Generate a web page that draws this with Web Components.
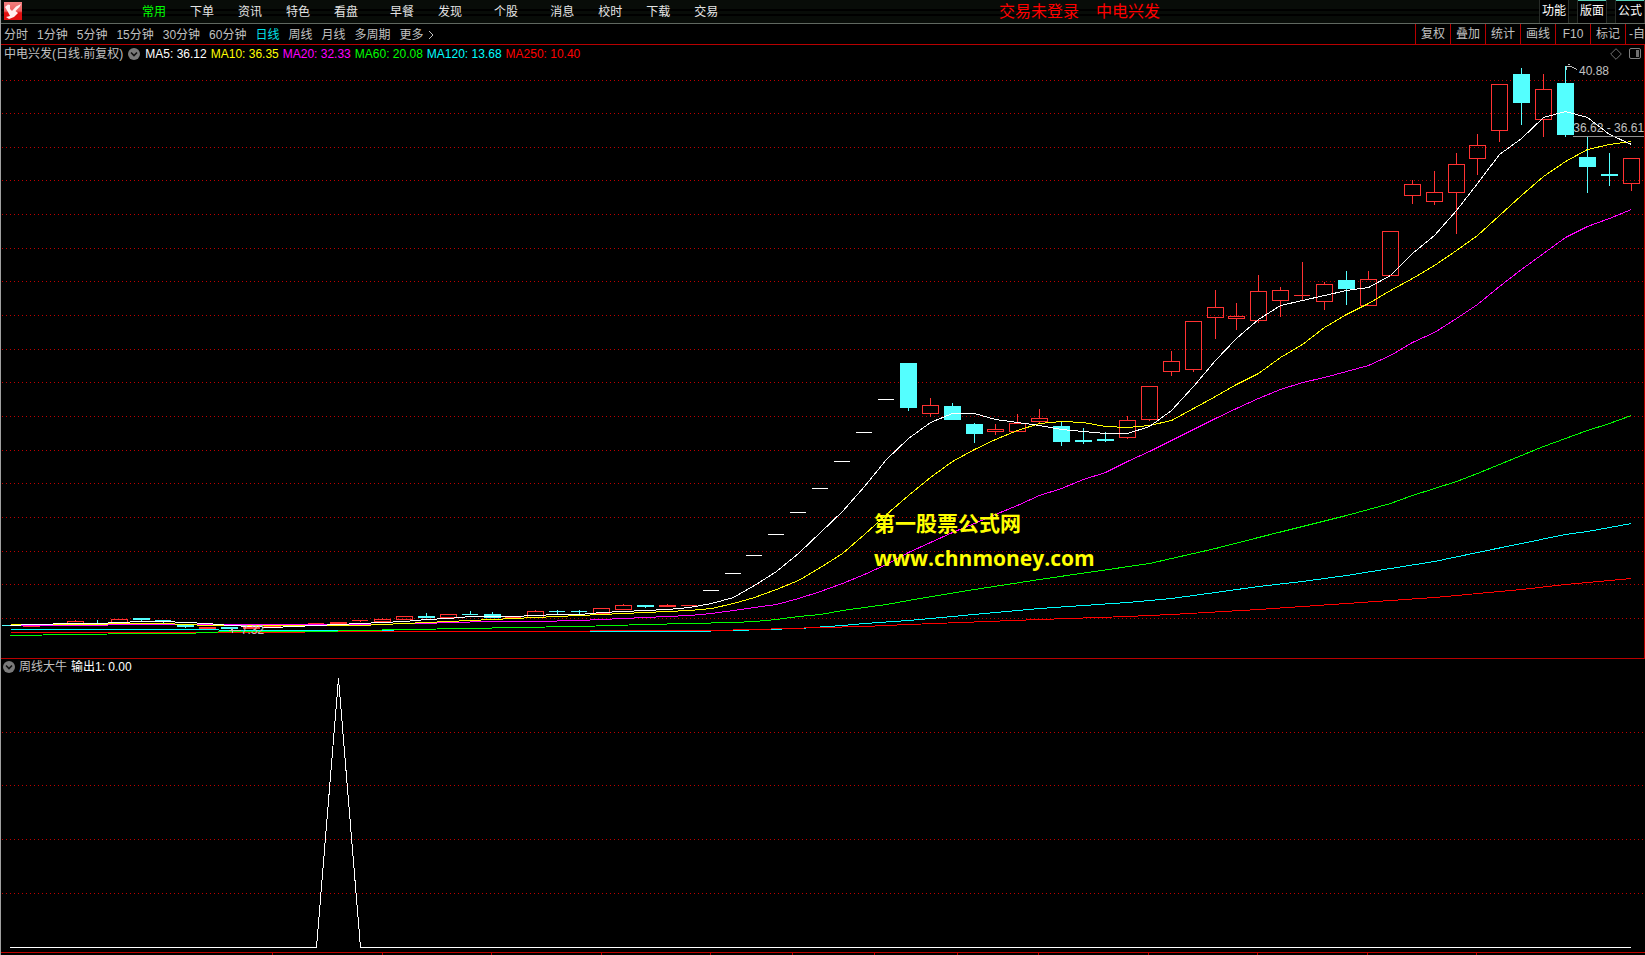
<!DOCTYPE html>
<html lang="zh-CN">
<head>
<meta charset="utf-8">
<title>中电兴发 - 日线</title>
<style>
html, body { margin: 0; height: 100%; background: #000; }
body { font: 12px/16px "Liberation Sans", "Noto Sans CJK SC", sans-serif; color: #c0c0c0; overflow: hidden; }
</style>
</head>
<body>
<stock-terminal></stock-terminal>
<script>
const SVG_BASE = `svg.plot{position:absolute;inset:0;width:100%;height:100%;display:block;shape-rendering:crispEdges}
  svg.plot polyline{fill:none;stroke-width:1}`;

class BaseElement extends HTMLElement {
  constructor() { super(); this.attachShadow({ mode: "open" }); }
  connectedCallback() { this.shadowRoot.innerHTML = this.render(); }
}

/* Round collapse button that sits beside an indicator title */
customElements.define("collapse-button", class extends BaseElement {
  render() {
    return `<style>
      :host{display:inline-flex}
      button{all:unset;display:flex;width:12px;height:12px;cursor:pointer}
    </style>
    <button type="button" aria-label="展开"><svg width="12" height="12" viewBox="0 0 12 12">
      <circle cx="6" cy="6" r="6" fill="#7a7a7a"/><path d="M3 4.5 6 7.5 9 4.5" fill="none" stroke="#111" stroke-width="1.6"/></svg></button>`;
  }
});

customElements.define("menu-group", class extends BaseElement {
  render() {
    return `<style>
      :host{display:flex;gap:24px}
      ::slotted(button){all:unset;cursor:pointer;white-space:nowrap}
      ::slotted(button[aria-current]){color:#00ff00}
    </style><slot></slot>`;
  }
});

customElements.define("menu-bar", class extends BaseElement {
  render() {
    return `<style>
      :host{display:block}
      header{display:grid;grid-template-columns:minmax(0,998fr) minmax(0,646fr);height:23px;box-sizing:content-box;
        border-bottom:1px solid #606860;background:linear-gradient(#080c08 0 9px,#000 9px 11px,#080c08 11px 14px,#000 14px 16px,#080c08 16px);color:#e4e4e4;overflow:hidden}
      .left,.right{display:flex;align-items:center;height:23px}
      .logo{margin:0 120px 2px 3px;flex:none}
      nav{display:flex;gap:32px}
      .status{font-size:16px;line-height:22px;color:#f00;display:flex;gap:17px;white-space:nowrap}
      .tools{margin-left:auto;display:flex;gap:8px;align-self:stretch}
      .tools button{all:unset;box-sizing:border-box;width:30px;background:#000;border:1px solid #282c28;border-width:0 1px;
        color:#fff;text-align:center;line-height:23px;white-space:nowrap;cursor:pointer}
      .tools button.on{box-shadow:inset 0 1px #58d0b8}
    </style>
    <header>
      <div class="left">
        <svg class="logo" width="18" height="18" viewBox="0 0 18 18" role="img" aria-label="通达信">
          <defs><linearGradient id="g" x1="0" y1="0" x2="0" y2="1"><stop offset="0" stop-color="#f08080"/><stop offset=".5" stop-color="#f06060"/><stop offset=".6" stop-color="#e01010"/></linearGradient></defs>
          <rect width="18" height="18" fill="url(#g)"/>
          <path d="M1 5 4 2.500 6 3 6 7 8 9 12 4.500 17 2 15.500 5 11.500 9 14 11 10 15 5 17 2 15 6 14 4 10Z" fill="#fff0f0"/>
        </svg>
        <nav>
          <menu-group><button aria-current="page">常用</button><button>下单</button><button>资讯</button><button>特色</button><button>看盘</button></menu-group>
          <menu-group><button>早餐</button><button>发现</button></menu-group>
          <menu-group><button>个股</button></menu-group>
          <menu-group><button>消息</button><button>校时</button><button>下载</button><button>交易</button></menu-group>
        </nav>
      </div>
      <div class="right">
        <div class="status"><span>交易未登录</span><span>中电兴发</span></div>
        <div class="tools"><button>功能</button><button class="on">版面</button><button class="on">公式</button></div>
      </div>
    </header>`;
  }
});

customElements.define("period-bar", class extends BaseElement {
  render() {
    const periods = ["分时", "1分钟", "5分钟", "15分钟", "30分钟", "60分钟", "日线", "周线", "月线", "多周期"];
    const tools = ["复权", "叠加", "统计", "画线", "F10", "标记"];
    return `<style>
      :host{display:block}
      .bar{display:flex;justify-content:space-between;height:20px;border-bottom:1px solid #b80000;overflow:hidden}
      button{all:unset;cursor:pointer;white-space:nowrap}
      nav{display:flex;align-items:center;gap:9px;padding:1px 0 0 3px}
      nav button[aria-current]{color:#00e0e8}
      .more{display:flex;align-items:center;gap:4px}
      .tools{display:flex}
      .tools button{box-sizing:border-box;width:35px;border-left:1px solid #b80000;text-align:center;line-height:21px}
      .tools button:last-child{width:20px;padding-left:3px;text-align:left;overflow:hidden}
    </style>
    <div class="bar">
      <nav>${periods.map(p => `<button${p === "日线" ? ' aria-current="page"' : ""}>${p}</button>`).join("")}
        <button class="more">更多<svg width="6" height="10" viewBox="0 0 6 10"><path d="M1 1 5 5 1 9" fill="none" stroke="#c0c0c0"/></svg></button></nav>
      <div class="tools">${tools.map(t => `<button>${t}</button>`).join("")}<button>-自选</button></div>
    </div>`;
  }
});

/* Geometry of the daily series: bar k has its centre at 10 + 21.91k */
const barX = k => Math.floor(10 + 21.91 * k);

/* [bar, kind, body top, body bottom, high, low]; r = rising, f = falling, w = limit board */
const CANDLES = [
  [0,"f",625,625,625,625],[1,"r",625,626,625,626],[3,"r",621,623,620,623],[4,"f",623,623,620,623],[5,"r",619,622,619,622],
  [6,"f",618,619,618,621],[7,"f",620,620,620,622],[8,"f",625,626,625,627],[9,"r",627,628,627,628],[10,"f",627,628,627,628],
  [11,"r",627,628,627,628],[12,"r",625,626,625,626],[13,"r",625,625,625,625],[14,"r",623,623,623,623],[15,"r",622,623,622,623],
  [16,"r",620,620,620,621],[17,"r",619,621,618,621],[18,"r",616,619,616,619],[19,"f",616,617,613,617],[20,"r",614,617,614,617],
  [21,"f",614,614,611,614],[22,"f",614,617,612,617],[23,"r",617,617,617,617],[24,"r",611,617,610,617],[25,"f",611,611,610,613],
  [26,"f",611,611,610,613],[27,"r",608,613,608,613],[28,"r",605,609,604,609],[29,"f",605,606,605,607],[30,"r",605,606,604,606],
  [31,"r",605,605,605,605],[32,"w",590,590,590,590],[33,"w",573,573,573,573],[34,"w",555,555,555,555],[35,"w",534,534,534,534],
  [36,"w",512,512,512,512],[37,"w",488,488,488,488],[38,"w",461,461,461,461],[39,"w",432,432,432,432],[40,"w",399,399,399,399],
  [41,"f",363,407,363,410],[42,"r",405,413,398,416],[43,"f",406,419,403,419],[44,"f",424,433,423,442],[45,"r",429,431,424,434],
  [46,"r",423,431,414,431],[47,"r",418,421,409,422],[48,"f",426,441,422,445],[49,"f",440,441,428,443],[50,"f",439,440,432,441],
  [51,"r",420,437,416,438],[52,"r",386,419,386,420],[53,"r",361,371,351,375],[54,"r",321,369,321,371],[55,"r",307,317,290,338],
  [56,"r",316,318,303,329],[57,"r",291,320,275,322],[58,"r",290,300,287,316],[59,"r",295,295,262,300],[60,"r",284,301,282,309],
  [61,"f",280,288,271,304],[62,"r",279,305,271,305],[63,"r",231,275,231,275],[64,"r",184,195,180,203],[65,"r",192,201,171,204],
  [66,"r",164,192,153,233],[67,"r",145,158,134,174],[68,"r",84,130,84,141],[69,"f",74,102,68,124],[70,"r",89,119,74,136],
  [71,"f",83,134,66,136],[72,"f",157,166,137,192],[73,"f",174,175,153,185],[74,"r",158,183,158,190]
];

/* Moving averages, as bar:y pairs; the first is drawn on top */
const AVERAGES = [
  ["#ffffff","0:625 1:624 3:623 4:623 5:622 6:621 7:621 8:622 9:623 10:625 11:626 12:627 13:626 14:625 15:624 16:623 17:622 18:621 19:619 20:618 21:616 22:616 23:616 24:615 25:614 26:614 27:612 28:611 29:610 30:609 31:607 32:603 33:597 34:585 35:571 36:553 37:532 38:511 39:486 40:459 41:438 42:422 43:413 44:413 45:419 46:422 47:425 48:429 49:431 50:433 51:433 52:426 53:410 54:386 55:360 56:338 57:319 58:305 59:300 60:295 61:290 62:287 63:275 64:253 65:235 66:210 67:183 68:154 69:138 70:117 71:111 72:117 73:134 74:144"],
  ["#ffff00","0:624 4:624 5:623 7:623 8:624 9:625 16:625 17:624 18:623 19:622 20:621 21:620 22:619 23:618 24:617 25:616 26:615 27:614 28:613 29:612 31:610 32:608 33:603 34:597 35:589 36:580 37:567 38:553 39:534 40:514 41:495 42:477 43:461 44:449 45:439 46:430 47:423 48:421 49:422 50:426 51:427 52:425 53:420 54:408 55:396 56:384 57:373 58:357 59:344 60:327 61:314 62:303 63:290 64:278 65:265 66:250 67:235 68:215 69:195 70:176 71:161 72:149 73:144 74:141"],
  ["#ff00ff","0:625 4:625 5:624 17:624 18:623 19:623 20:622 22:621 24:621 26:620 27:619 28:618 29:617 30:616 31:615 32:613 33:610 34:607 35:604 36:598 37:591 38:583 39:574 40:564 41:552 42:542 43:532 44:523 45:514 46:505 47:495 48:488 49:479 50:472 51:461 52:451 53:440 54:429 55:418 56:408 57:398 58:389 59:382 60:377 61:371 62:365 63:355 64:342 65:332 66:318 67:304 68:286 69:269 70:253 71:237 72:226 73:218 74:209"],
  ["#00ff00","0:635 3:634 6:633 8:633 10:631 14:631 16:630 18:629 21:628 23:627 26:626 29:624 31:623 33:622 34:621 35:619 36:616 37:614 38:610 39:607 40:604 41:600 44:589 47:579 52:563 53:558 55:548 57:537 59:526 61:515 63:503 64:495 66:481 67:473 69:455 70:446 72:430 73:423 74:415"],
  ["#ff0000","0:632 13:632 14:631 26:631 27:630 32:630 34:629 37:627 39:626 41:624 47:619 51:616 53:614 57:609 61:603 65:597 69:589 71:584 74:578"],
  ["#00ffff","0:629 9:629 10:630 17:630 18:631 31:631 33:630 36:628 38:625 39:623 41:620 47:608 51:602 53:598 55:592 57:586 59:581 61:575 63:568 65:561 67:552 69:543 71:534 72:531 74:523"]
];

const gridLine = y => `<line x1="2" x2="1643" y1="${y}.5" y2="${y}.5" stroke="#c00000" stroke-dasharray="1 3"/>`;

function candle([k, kind, top, bottom, high, low]) {
  const x = barX(k), color = { r: "#ff3232", f: "#54ffff", w: "#ffffff" }[kind];
  let s = "";
  if (bottom === top) s += `<rect x="${x - 8}" y="${top}" width="16" height="1" fill="${color}"/>`;
  else if (kind === "f" || bottom - top === 1) s += `<rect x="${x - 8}" y="${top}" width="17" height="${bottom - top + 1}" fill="${color}"/>`;
  else s += `<rect x="${x - 7.5}" y="${top + .5}" width="16" height="${bottom - top}" fill="none" stroke="${color}"/>`;
  if (high < top) s += `<rect x="${x}" y="${high}" width="1" height="${top - high}" fill="${color}"/>`;
  if (low > bottom) s += `<rect x="${x}" y="${bottom + 1}" width="1" height="${low - bottom}" fill="${color}"/>`;
  return s;
}

const averageLine = ([color, text]) => `<polyline stroke="${color}" points="${text.split(" ").map(p => {
  const [k, y] = p.split(":").map(Number); return (barX(k) + .5) + "," + (y + .5); }).join(" ")}"/>`;

customElements.define("average-legend", class extends BaseElement {
  render() {
    const items = [["MA5: 36.12","#fff"],["MA10: 36.35","#ff0"],["MA20: 32.33","#f0f"],["MA60: 20.08","#0f0"],["MA120: 13.68","#0ff"],["MA250: 10.40","#f00"]];
    return `<style>
      :host{display:flex;align-items:center;gap:5px;white-space:nowrap}
      .values{display:flex;gap:4px}
      .tools{display:flex;gap:7px;margin-left:auto;align-items:center}
      button{all:unset;display:flex;cursor:pointer}
    </style>
    <span>中电兴发(日线.前复权)</span><collapse-button></collapse-button>
    <div class="values">${items.map(([t, c]) => `<span style="color:${c}">${t}</span>`).join("")}</div>
    <div class="tools">
      <button aria-label="标记"><svg width="12" height="12" viewBox="0 0 12 12"><path d="M6 .7 11.300 6 6 11.300 .7 6Z" fill="none" stroke="#707070"/></svg></button>
      <button aria-label="侧栏"><svg width="12" height="12" viewBox="0 0 12 12"><rect x=".5" y=".5" width="11" height="10" rx="1.500" fill="none" stroke="#808080"/><rect x="7" y="2" width="3" height="7" fill="#707070"/></svg></button>
    </div>`;
  }
});

customElements.define("price-chart", class extends BaseElement {
  render() {
    const rows = Array.from({ length: 17 }, (_, i) => Math.floor(80 + i * 33.65));
    return `<style>${SVG_BASE}
      :host{display:block;position:relative;border-bottom:1px solid #b80000;border-right:1px solid #b80000;overflow:hidden}
      average-legend{position:relative;padding:1px 3px 0}
      .tag{position:absolute;white-space:nowrap}
      .high{right:35px;top:3%}
      .gap{left:95.700%;top:12.200%}
      .low{left:14.600%;top:94.200%}
      .mark{position:absolute;left:53.140%;top:75.200%;color:#ff0;font-weight:bold;white-space:nowrap}
      .mark p{margin:0;font-size:21px;line-height:35px}
      .mark .url{font-family:"Open Sans",sans-serif}
    </style>
    <svg class="plot" viewBox="1 45 1643 613" preserveAspectRatio="none" aria-hidden="true">
      ${rows.map(gridLine).join("")}
      ${CANDLES.map(candle).join("")}
      ${AVERAGES.slice().reverse().map(averageLine).join("")}
      <path d="M229 630.500h12M232.500 628v5M231 629h2" fill="none" stroke="#c0c0c0"/>
      <path d="M1566 66.500h5l6 3M1568 64.500h2M1566.500 67v3" fill="none" stroke="#c0c0c0"/>
      <rect x="1573" y="136" width="71" height="1" fill="#909090"/>
    </svg>
    <average-legend></average-legend>
    <span class="tag low">7.32</span>
    <span class="tag high">40.88</span>
    <span class="tag gap">36.62 - 36.61</span>
    <div class="mark"><p>第一股票公式网</p><p class="url">www.chnmoney.com</p></div>`;
  }
});

customElements.define("indicator-panel", class extends BaseElement {
  render() {
    const ticks = [272,382,491,601,710,792,874,957,1038,1148,1257,1367,1476];
    return `<style>${SVG_BASE}
      :host{display:block;position:relative;overflow:hidden}
      .title{position:relative;display:flex;align-items:center;gap:4px;padding-left:2px}
      .value{color:#fff}
    </style>
    <svg class="plot" viewBox="1 659 1644 296" preserveAspectRatio="none" aria-hidden="true">
      ${[732, 785, 839, 893].map(gridLine).join("")}
      <polyline stroke="#fff" points="10,947.5 ${barX(14)}.5,947.5 ${barX(15)}.5,678.5 ${barX(16)}.5,947.5 1631,947.5"/>
      <rect x="1" y="952" width="1644" height="1" fill="#c00000"/>
      ${ticks.map(x => `<rect x="${x}" y="953" width="1" height="2" fill="#c00000"/>`).join("")}
    </svg>
    <div class="title"><collapse-button></collapse-button><span>周线大牛</span><span class="value">输出1: 0.00</span></div>`;
  }
});

customElements.define("stock-terminal", class extends BaseElement {
  render() {
    return `<style>
      :host{display:block;height:100vh}
      main{box-sizing:border-box;height:100%;border-left:1px solid #a0a0a0;display:grid;
        grid-template-rows:auto auto minmax(0,614fr) minmax(0,296fr)}
    </style>
    <main><menu-bar></menu-bar><period-bar></period-bar><price-chart></price-chart><indicator-panel></indicator-panel></main>`;
  }
});
</script>
</body>
</html>
